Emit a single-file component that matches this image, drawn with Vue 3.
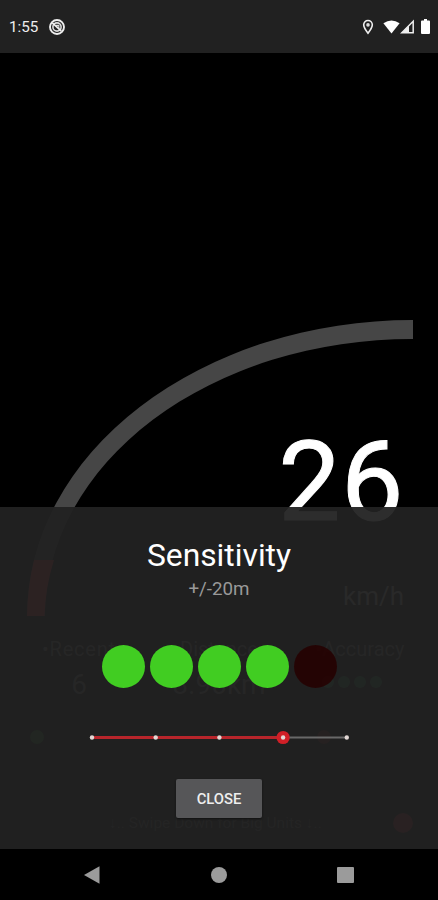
<script setup>
const levels = [true, true, true, true, false]
const ticks = [0, 1, 2, 3, 4]
const selected = 3
</script>

<template>
  <div class="phone">
    <header class="status">
      <span class="time">1:55</span>
      <svg class="app-icon" width="18" height="18" viewBox="0 0 18 18">
        <circle cx="9" cy="9" r="7" fill="none" stroke="#eee" stroke-width="1.9" />
        <circle cx="9" cy="9" r="4.1" fill="none" stroke="#ddd" stroke-width="1.6" />
        <path d="M4.3 4.8L13.3 13" stroke="#eee" stroke-width="1.7" />
        <path d="M8 7.3h2.8v2.8" fill="none" stroke="#ddd" stroke-width="1.2" />
      </svg>
      <span class="spacer"></span>
      <svg class="pin" width="12" height="16" viewBox="0 0 12 16">
        <path d="M6 14.2C3.4 10.9 1.7 8.400 1.7 5.8a4.3 4.3 0 0 1 8.6 0C10.3 8.400 8.600 10.9 6 14.2Z" fill="none" stroke="#eee" stroke-width="1.6" />
        <circle cx="6" cy="5.9" r="1.800" fill="#ddd" />
      </svg>
      <svg class="wifi" width="17" height="14" viewBox="0 0 17 14">
        <path d="M.4 3.2Q8.5-2.4 16.6 3.2L8.5 13.4Z" fill="#fff" />
      </svg>
      <svg class="signal" width="15" height="15" viewBox="0 0 15 15">
        <path d="M1.8 13.7L13.2 2.2V13.7Z" fill="none" stroke="#eee" stroke-width="1.5" />
        <path d="M1.5 14L9 6.5V14Z" fill="#eee" />
      </svg>
      <svg class="battery" width="9" height="15" viewBox="0 0 9 15">
        <path d="M3 0h3v1.6h2q1 0 1 1v11.4q0 1-1 1H1q-1 0-1-1V2.6q0-1 1-1h2Z" fill="#fff" />
      </svg>
    </header>

    <main class="screen">
      <section class="gauge">
        <svg class="arc" width="438" height="310" viewBox="0 0 438 310">
          <path d="M27 303A386 296 0 0 1 413 7V26A367 277 0 0 0 45 303Z" fill="#464646" />
          <path d="M27 303Q27.500 274 34 247H54Q45.500 274 44.500 303Z" fill="#e52b35" />
        </svg>
        <div class="speed">26</div>
        <div class="unit">km/h</div>
      </section>
      <section class="stats">
        <div class="stat"><span class="name">•Recent</span><span class="value">6</span></div>
        <div class="stat"><span class="name">Distance</span><span class="value">8.90km</span></div>
        <div class="stat">
          <span class="name">•Accuracy</span>
          <span class="dots"><i v-for="n in 4" :key="n"></i></span>
        </div>
      </section>
      <section class="markers"><i class="green"></i><i class="red"></i></section>
      <footer class="hint"><span>↓.. Swipe Down for Big Units ↓..</span><i></i></footer>

      <section class="sheet">
        <h1>Sensitivity</h1>
        <p>+/-20m</p>
        <div class="levels">
          <i v-for="(on, i) in levels" :key="i" :class="{ on }"></i>
        </div>
        <svg class="slider" width="275" height="16" viewBox="0 0 275 16">
          <path d="M10 7.500H265" stroke="#686868" stroke-width="2" />
          <path d="M10 7.500H201" stroke="#b8252b" stroke-width="3" />
          <circle :cx="10 + selected * 63.7" cy="7.500" r="6.600" fill="#d01f27" />
          <circle v-for="t in ticks" :key="t" :cx="10 + t * 63.7" cy="7.500" r="2.200" fill="#e2d8d5" />
        </svg>
        <button>CLOSE</button>
      </section>
    </main>

    <nav class="navbar">
      <svg width="16" height="18" viewBox="0 0 16 18"><path d="M0 9L15.500 .3V17.700Z" fill="#9b9b9b" /></svg>
      <svg width="16" height="16" viewBox="0 0 16 16"><circle cx="8" cy="8" r="8" fill="#9b9b9b" /></svg>
      <svg width="17" height="16" viewBox="0 0 17 16"><rect width="17" height="16" rx="1" fill="#9b9b9b" /></svg>
    </nav>
  </div>
</template>

<style>
body { background: #000; }
</style>

<style scoped>
.phone {
  width: 438px;
  height: 900px;
  display: flex;
  flex-direction: column;
  overflow: hidden;
  background: #000;
  color: #fff;
  font-family: Roboto, sans-serif;
}
.status {
  height: 53px;
  flex: none;
  box-sizing: border-box;
  padding: 0 8px 0 9px;
  display: flex;
  align-items: center;
  background: #212121;
}
.time { width: 31px; font-size: 15.2px; color: #eee; line-height: 20px; padding-top: 1px; }
.app-icon { margin-left: 8px; }
.spacer { flex: 1; }
.wifi { margin-left: 9px; }
.battery { margin-left: 6px; }
.screen {
  position: relative;
  flex: 1;
  display: flex;
  flex-direction: column;
}
.gauge {
  height: 584px;
  display: flex;
  flex-direction: column;
  align-items: flex-end;
  box-sizing: border-box;
  padding: 362px 34px 0 0;
}
.arc { position: absolute; left: 0; top: 260px; }
.speed { font-size: 111px; line-height: 134px; z-index: 1; letter-spacing: .5px; -webkit-text-stroke: 1px #fff; }
.unit { margin-top: 30px; font-size: 26px; line-height: 34px; color: #aaa; }
.stats {
  display: grid;
  grid-template-columns: 120px 152px 122px;
  padding-left: 19px;
  gap: 4px;
  height: 89px;
  color: #777;
}
.stat { display: flex; flex-direction: column; align-items: center; }
.name { font-size: 20px; line-height: 24px; }
.stat:first-child .name { letter-spacing: .8px; }
.value { font-size: 28px; line-height: 48px; }
.dots { display: flex; gap: 4px; margin: 15px 17px 0 0; }
.dots i { width: 12px; height: 12px; border-radius: 50%; background: #1c7b40; }
.markers { display: flex; justify-content: space-between; padding: 4px 107px 0 30px; height: 81px; box-sizing: border-box; }
.markers i { width: 14px; height: 14px; border-radius: 50%; }
.green { background: #287b28; }
.red { background: #701818; }
.hint { display: flex; align-items: center; height: 31px; padding-left: 109px; font-size: 15.5px; color: #555; }
.hint span { width: 284px; }
.hint i { width: 20px; height: 20px; border-radius: 50%; background: #a51f2a; }
.sheet {
  position: absolute;
  z-index: 2;
  left: 0;
  right: 0;
  top: 454px;
  bottom: 0;
  display: flex;
  flex-direction: column;
  align-items: center;
  background: rgba(34, 34, 34, .95);
}
h1 { margin: 28px 0 0; font-size: 31.8px; font-weight: 400; line-height: 40px; }
p { margin: 2px 0 0; font-size: 18.8px; line-height: 24px; color: #999; }
.levels { display: flex; gap: 5px; margin-top: 44px; }
.levels i { width: 43px; height: 43px; border-radius: 50%; background: rgba(38, 0, 0, .85); }
.levels .on { background: #41cd22; }
.slider { margin-top: 42px; }
button {
  width: 86px;
  height: 39px;
  margin-top: 33px;
  padding: 0;
  border: 0;
  border-radius: 2px;
  background: #565658;
  box-shadow: 0 1px 2px #111;
  color: #eee;
  font: 500 14.8px/40px Roboto, sans-serif;
}
.navbar {
  height: 51px;
  flex: none;
  box-sizing: border-box;
  padding: 0 84px;
  display: flex;
  align-items: center;
  justify-content: space-between;
}
</style>
